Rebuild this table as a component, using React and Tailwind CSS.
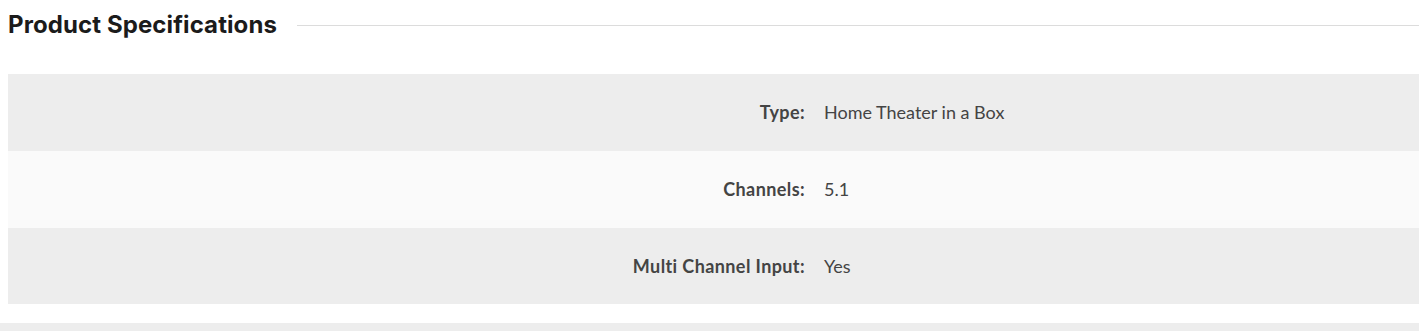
const specs = [
  { label: 'Type:', value: 'Home Theater in a Box' },
  { label: 'Channels:', value: '5.1' },
  { label: 'Multi Channel Input:', value: 'Yes' },
]

export default function App() {
  return (
    <div className="bg-white w-[1419px] h-[331px] overflow-hidden">
      {/* heading with rule */}
      <div className="flex items-center gap-5 pl-2 h-[50px]">
        <h2 className="font-['Inter',sans-serif] font-bold text-[24px] leading-[30px] text-[#1b1b1b] tracking-[0.1px] shrink-0">
          Product Specifications
        </h2>
        <div className="flex-1 h-px bg-[#dcdcdc]" />
      </div>

      {/* spec table */}
      <div className="mt-[24px] ml-2 font-['Lato',sans-serif] text-[18px] text-[#444]">
        {specs.map((s, i) => (
          <div
            key={s.label}
            className={`grid grid-cols-[807px_1fr] items-center ${i === 2 ? 'h-[76px]' : 'h-[77px]'} ${i % 2 === 0 ? 'bg-[#ededed]' : 'bg-[#fafafa]'}`}
          >
            <div className="text-right font-bold tracking-[0.4px] pr-[10px]">{s.label}</div>
            <div className="pl-[9px]">{s.value}</div>
          </div>
        ))}
      </div>

      <div className="mt-[19px] h-[20px] bg-[#ededed]" />
    </div>
  )
}
